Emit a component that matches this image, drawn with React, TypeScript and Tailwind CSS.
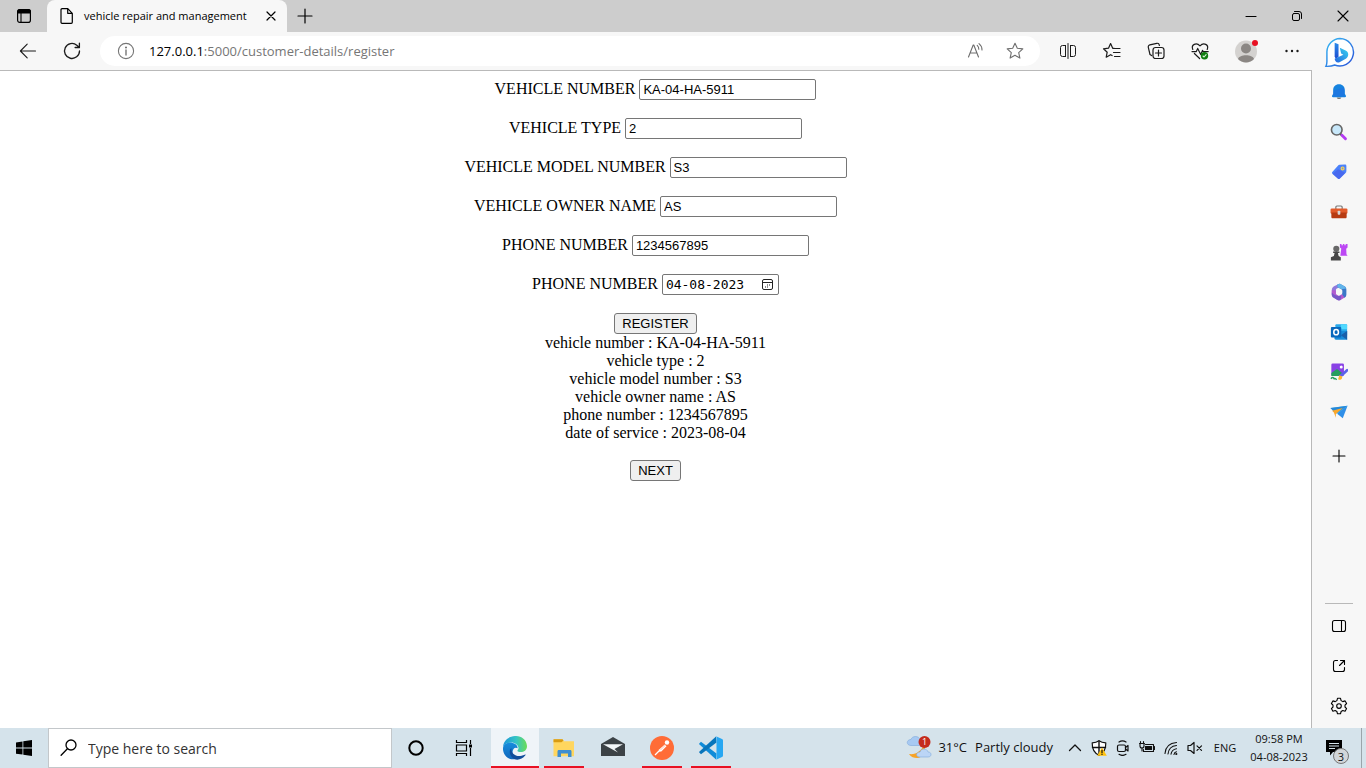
import type { ReactNode } from "react";

type IconProps = { className?: string; box?: string; children: ReactNode };

function Icon({ className = "size-5", box = "0 0 20 20", children }: IconProps) {
  return (
    <svg
      viewBox={box}
      className={className}
      fill="none"
      stroke="currentColor"
      strokeWidth="1.1"
      strokeLinecap="round"
      strokeLinejoin="round"
      aria-hidden="true"
    >
      {children}
    </svg>
  );
}

const starPath = "M10 2.2 12.3 7.3 17.8 7.9 13.7 11.6 14.9 17.1 10 14.3 5.1 17.1 6.3 11.6 2.2 7.9 7.7 7.3Z";

function IconButton({ label, className = "w-11", children }: { label: string; className?: string; children: ReactNode }) {
  return (
    <button type="button" aria-label={label} className={`flex h-full shrink-0 items-center justify-center ${className}`}>
      {children}
    </button>
  );
}

function TitleBar() {
  return (
    <header className="flex h-8 shrink-0 bg-[#cdcdcd] text-black">
      <IconButton label="Tab actions" className="w-[47px]">
        <Icon className="size-4" box="0 0 16 16">
          <rect x="1.6" y="1.6" width="12.8" height="12.8" rx="2.2" strokeWidth="1.2" />
          <path d="M1.6 5V3.8A2.2 2.2 0 0 1 3.8 1.6h8.4a2.2 2.2 0 0 1 2.2 2.2V5Z" fill="currentColor" />
          <path d="M5 5v9.4" />
        </Icon>
      </IconButton>
      <div className="flex w-60 items-center rounded-t-lg bg-[#f7f7f7] pl-3">
        <Icon className="size-4 shrink-0" box="0 0 16 16">
          <path d="M2 1.7a1 1 0 0 1 1-1h5.8L13.3 5.300V14.3a1 1 0 0 1-1 1H3a1 1 0 0 1-1-1ZM8.700.8v4.500h4.500" strokeWidth="1.2" />
        </Icon>
        <span className="ml-[9px] flex-1 text-[11px] leading-4 whitespace-nowrap">vehicle repair and management</span>
        <button type="button" aria-label="Close tab" className="mr-2 flex size-4 shrink-0 items-center justify-center">
          <Icon className="size-4" box="0 0 16 16">
            <path d="m4 4 8 8M12 4l-8 8" strokeWidth="1.2" />
          </Icon>
        </button>
      </div>
      <IconButton label="New tab" className="w-9">
        <Icon className="size-4" box="0 0 16 16">
          <path d="M8 1v14M1 8h14" strokeWidth="1.2" />
        </Icon>
      </IconButton>
      <div className="flex-1" />
      <IconButton label="Minimize" className="w-[46px]">
        <Icon className="size-3" box="0 0 12 12">
          <path d="M1 6.500h10" />
        </Icon>
      </IconButton>
      <IconButton label="Restore" className="w-[46px]">
        <Icon className="size-3" box="0 0 12 12">
          <rect x="1.500" y="3.500" width="7" height="7" rx="1.500" strokeWidth="1" />
          <path d="M3.500 1.500h4.500a2.500 2.500 0 0 1 2.500 2.500v4.500" strokeWidth="1" />
        </Icon>
      </IconButton>
      <IconButton label="Close window" className="w-[46px]">
        <Icon className="size-3" box="0 0 12 12">
          <path d="m1 1 10 10M11 1 1 11" />
        </Icon>
      </IconButton>
    </header>
  );
}

function Toolbar() {
  return (
    <nav className="flex h-[38px] shrink-0 items-center bg-[#f7f7f7] pl-1.5 text-[#1b1b1b]">
      <IconButton label="Back">
        <Icon>
          <path d="M17.500 10H2.500M9.200 3.200 2.400 10l6.800 6.800" />
        </Icon>
      </IconButton>
      <IconButton label="Refresh">
        <Icon>
          <path d="M17.500 10A7.500 7.500 0 1 1 14.800 4.200L17.400 6.500M17.400 2.200v4.300h-4.300" strokeWidth="1.3" />
        </Icon>
      </IconButton>
      <div className="mx-1.5 flex h-[30px] min-w-0 flex-1 items-center rounded-full bg-white pr-1 pl-4">
        <Icon className="size-5 shrink-0 text-[#767676]">
          <circle cx="10" cy="10" r="7.600" />
          <path d="M10 9v5" strokeWidth="1.400" />
          <circle cx="10" cy="6.500" r=".5" fill="currentColor" />
        </Icon>
        <a href="#address" className="ml-[13px] flex-1 truncate text-[13px] leading-5 text-[#767676]">
          <span className="text-black">127.0.0.1</span>:5000/customer-details/register
        </a>
        <button type="button" aria-label="Read aloud" className="flex w-9 justify-center text-[#6e6e6e]">
          <Icon>
            <path d="m2.500 16 4.700-12h.6l4.700 12M4.100 12h6.800" />
            <path d="M11.200 4.400a5 5 0 0 1 1.600 3.900M13 2.600a8 8 0 0 1 3 6.400" />
          </Icon>
        </button>
        <button type="button" aria-label="Add to favorites" className="flex w-[42px] justify-center text-[#6e6e6e]">
          <Icon>
            <path d={starPath} />
          </Icon>
        </button>
      </div>
      <IconButton label="Split screen">
        <Icon>
          <path d="M7.500 4.500H4.500a2 2 0 0 0-2 2v7a2 2 0 0 0 2 2h3M12.500 4.500h3a2 2 0 0 1 2 2v7a2 2 0 0 1-2 2h-3M7.500 4.500v11M12.500 4.500v11M10 2.500v15" strokeWidth="1" />
        </Icon>
      </IconButton>
      <IconButton label="Favorites">
        <Icon>
          <path d="M12.200 7.300h-1.500L8.600 2.600 6.500 7.200l-5 .6 3.700 3.400-1 5 4.400-2.500 1.500.8M12.500 7.500h5.500M11.500 11.500H18M12.500 15.500H18" strokeWidth="1.2" />
        </Icon>
      </IconButton>
      <IconButton label="Collections">
        <Icon>
          <rect x="7" y="6.500" width="11" height="11" rx="2.500" strokeWidth="1.2" />
          <path d="M12.500 9v6M9.500 12h6M5.600 14.600 4 13.500 2.300 6.300a2 2 0 0 1 1.500-2.400l7-1.600a2 2 0 0 1 2.400 1.500l.2.700" strokeWidth="1.2" />
        </Icon>
      </IconButton>
      <IconButton label="Browser essentials">
        <Icon>
          <path d="M2.800 8.500C.8 3.700 6.300.8 10 4.900c3.700-4.100 9.200-1.200 7.200 3.600M2 10.600h4.300l1.400-3.200 3 6 1.800-4 .7 1.200h5M4.400 12.500l5.200 5" strokeWidth="1.2" />
          <circle cx="14.500" cy="14.800" r="3.700" fill="#107c10" stroke="none" />
          <path d="m13 15 1.100 1 2-2.300" stroke="#d9f2d9" />
        </Icon>
      </IconButton>
      <IconButton label="Profile" className="w-12">
        <svg viewBox="0 0 24 24" className="size-6" aria-hidden="true">
          <circle cx="12" cy="12.500" r="11" fill="#d4d2d0" />
          <circle cx="12" cy="9.500" r="5" fill="#8b8784" />
          <path d="M4 20c1.500-5 14.500-5 16 0a11 11 0 0 1-16 0Z" fill="#8b8784" />
          <circle cx="21" cy="4" r="3" fill="#e81123" />
        </svg>
      </IconButton>
      <IconButton label="Settings and more" className="w-[42px]">
        <Icon>
          <g fill="currentColor" stroke="none">
            <circle cx="5.500" cy="10" r="1.200" />
            <circle cx="11" cy="10" r="1.200" />
            <circle cx="16.500" cy="10" r="1.200" />
          </g>
        </Icon>
      </IconButton>
    </nav>
  );
}

const fields = [
  { id: "vehicle-number", label: "VEHICLE NUMBER", value: "KA-04-HA-5911" },
  { id: "vehicle-type", label: "VEHICLE TYPE", value: "2" },
  { id: "vehicle-model", label: "VEHICLE MODEL NUMBER", value: "S3" },
  { id: "owner-name", label: "VEHICLE OWNER NAME", value: "AS" },
  { id: "phone-number", label: "PHONE NUMBER", value: "1234567895" },
];

const details = [
  "vehicle number : KA-04-HA-5911",
  "vehicle type : 2",
  "vehicle model number : S3",
  "vehicle owner name : AS",
  "phone number : 1234567895",
  "date of service : 2023-08-04",
];

const formButton =
  "h-[21px] rounded-[3px] border border-[#767676] bg-[#efefef] px-[7px] font-['Liberation_Sans',sans-serif] text-[13px] leading-4 text-black";

function RegisterPage() {
  return (
    <main className="flex-1 overflow-auto border-t border-r border-[#b9b9b9] bg-white p-2 font-['Liberation_Serif',serif] text-[16px] leading-[18px] text-black">
      <form className="flex flex-col items-center gap-[18px]" onSubmit={(event) => event.preventDefault()}>
        {fields.map((field) => (
          <div key={field.id} className="flex h-[21px] items-baseline gap-1">
            <label htmlFor={field.id}>{field.label}</label>
            <input
              id={field.id}
              type="text"
              defaultValue={field.value}
              className="h-[21px] w-[177px] rounded-[2px] border border-[#767676] px-[3px] font-['Liberation_Sans',sans-serif] text-[13px]"
            />
          </div>
        ))}
        <div className="flex h-[21px] items-baseline gap-1">
          <label htmlFor="service-date">PHONE NUMBER</label>
          <div className="flex h-[21px] w-[117px] items-center rounded-[2px] border border-[#767676] px-[3px]">
            <input
              id="service-date"
              type="text"
              defaultValue="04-08-2023"
              className="h-4 min-w-0 flex-1 font-['DejaVu_Sans_Mono','Liberation_Mono',monospace] text-[13px]"
            />
            <button type="button" aria-label="Show date picker" className="mr-px">
              <svg viewBox="0 0 13 13" className="size-[13px]" fill="none" stroke="#222" aria-hidden="true">
                <rect x="1.500" y="1.500" width="10" height="10" rx="1.500" />
                <path d="M1.500 4.500h10" />
                <path d="M6 7h1M8 7h1M4 9h1M6 9h1" strokeWidth="1.200" />
              </svg>
            </button>
          </div>
        </div>
        <button type="submit" className={formButton}>REGISTER</button>
      </form>
      <section className="text-center">
        {details.map((line) => (
          <p key={line}>{line}</p>
        ))}
        <button type="button" className={`mt-[18px] ${formButton}`}>NEXT</button>
      </section>
    </main>
  );
}

function BingLogo() {
  return (
    <svg viewBox="0 0 32 32" className="size-[31px]" aria-hidden="true">
      <defs>
        <linearGradient id="bing-ring" x1="0" y1="0" x2="1" y2="1">
          <stop offset="0" stopColor="#37bdf4" />
          <stop offset="1" stopColor="#2850d8" />
        </linearGradient>
        <linearGradient id="bing-b" x1="0" y1="0" x2="0" y2="1">
          <stop offset="0" stopColor="#2b8bea" />
          <stop offset="1" stopColor="#1b49cf" />
        </linearGradient>
        <linearGradient id="bing-sweep" x1="1" y1="0" x2="0" y2="1">
          <stop offset="0" stopColor="#38d6ef" />
          <stop offset="1" stopColor="#2463df" />
        </linearGradient>
      </defs>
      <path d="M16.500 1.500A14.200 14.200 0 1 1 11 28.900c-2.500 1.200-5.300 1.500-9 1.400.8-1.500 1-3 1-5V15.100A14 14 0 0 1 16.500 1.500Z" fill="#fff" stroke="url(#bing-ring)" strokeWidth="1.500" />
      <path d="m11 6 4 1.500v12.700L12.500 23 11 20.500Z" fill="url(#bing-b)" />
      <path d="m16.300 11.200 6 2.800c4 2 3.300 6.600.2 8.500L16 26c-2.800 1.200-5-1.100-5-3.500l9-4.200-2.300-1.200Z" fill="url(#bing-sweep)" />
    </svg>
  );
}

const sideIcons: { label: string; art: ReactNode }[] = [
  {
    label: "Notifications",
    art: (
      <>
        <path d="M7.500 16h5c-.4 2.500-4.600 2.500-5 0Z" fill="#777" />
        <path d="M10 1.500C6 1.500 3.500 4.500 3.500 8v4l-1.200 2.300c-.3.900.1 1.500 1 1.500h13.400c.9 0 1.300-.6 1-1.500L16.500 12V8c0-3.500-2.500-6.500-6.500-6.500Z" fill="#1683df" />
        <path d="M4 8.500 3 15h13c0-4 0-8-1-10Z" fill="#2b62e3" opacity=".35" />
      </>
    ),
  },
  {
    label: "Search",
    art: (
      <>
        <path d="m11.500 12 2 2" stroke="#555" strokeWidth="2.500" />
        <path d="m13.300 13.600 3.900 3.900" stroke="#b43bf2" strokeWidth="3.200" strokeLinecap="round" />
        <circle cx="7.500" cy="7.500" r="5.900" fill="#c8e8fa" stroke="#666" strokeWidth="1.800" />
      </>
    ),
  },
  {
    label: "Shopping",
    art: (
      <>
        <path d="m10.500 2 6-.2a1.500 1.500 0 0 1 1.700 1.500v5.500c0 1-.3 1.600-1 2.200L11 17.300c-.8.800-1.600.8-2.400 0l-5.800-5.200c-.8-.7-.8-1.500 0-2.300l6-6.800c.5-.6 1-.9 1.700-1Z" fill="#4b82fb" />
        <path d="m3 12 6-5 8 4-6 6.300c-.8.800-1.600.8-2.400 0Z" fill="#454fe3" opacity=".5" />
        <circle cx="14" cy="6" r="1.600" fill="#7798cf" stroke="#ffd24b" strokeWidth="1.300" />
      </>
    ),
  },
  {
    label: "Tools",
    art: (
      <>
        <path d="M6.500 7V4.500c0-1 .4-1.200 1.200-1.200h4.600c.8 0 1.200.2 1.200 1.200V7" fill="none" stroke="#777" strokeWidth="1.300" />
        <rect x=".6" y="6" width="18.800" height="6" rx="1.400" fill="#e25b2b" />
        <path d="M1.500 10.500h17V15.500c0 1-.4 1.500-1.500 1.500H3c-1.100 0-1.500-.5-1.500-1.500Z" fill="#b73b12" />
        <rect x="8.500" y="8.500" width="3" height="4.500" rx="1" fill="#d7d7d7" />
      </>
    ),
  },
  {
    label: "Games",
    art: (
      <>
        <path d="M11 1h1.800v1.600h1.500V1H16v1.600h1.400V1H19.500V5l-1.500 1.500.3 6 1.200 1.700h-8l1-8L11 5Z" fill="#bc48f4" />
        <circle cx="7" cy="6.500" r="3.400" fill="#686868" />
        <path d="M3.500 9.500h7v1.600H8.800l.8 3.400 2.400 1.300V19.500H1v-3.700l3.300-1.300.8-3.400H3.500Z" fill="#484848" />
      </>
    ),
  },
  {
    label: "Microsoft 365",
    art: (
      <>
        <path d="M10.500.8 5 3.200C3 4.200 2 5.500 2 8v5.500l4.500-1.800V8c0-1 .4-1.500 1.200-2L12.500 3.500Z" fill="#8f79dc" />
        <path d="M2 8v4.500c0 2 .7 3 2.200 4l4 2.300c1.200.7 2.400.7 3.600 0l4-2.300c1.300-.8 2-1.700 2.200-3.500l-5-.5-2.500 1.600c-.4.200-.8.200-1.200 0l-2-1.200c-.6-.4-.8-.8-.8-1.600V8Z" fill="#b35bcf" />
        <path d="M8.500 1.300 11 .8l5 2.800c1.400.8 2.200 2 2.200 3.800v5.200c0 1.700-.7 2.900-2 3.800l-3-4.200c.4-.4.500-.8.500-1.400V8.600c0-.8-.4-1.300-1-1.700L8 4.500Z" fill="#3b78c8" />
        <path d="M8.500 1.300 11 .8l5 2.800c1 .6 1.700 1.400 2 2.400l-5.200 1L8 4.500Z" fill="#62b4ea" />
        <path d="M2 10.500c2.500 3 6 4.500 10.500 3.500l-.7 4.800c-1.200.7-2.400.7-3.600 0l-4-2.300c-1.500-1-2.200-2-2.200-4Z" fill="#6357c4" opacity=".75" />
      </>
    ),
  },
  {
    label: "Outlook",
    art: (
      <>
        <rect x="6" y="1.500" width="13" height="13" rx="1" fill="#28a8ea" />
        <path d="M12 1.500h7V7h-7Z" fill="#50d9ff" />
        <path d="M5 9h14v9.500H6.500A1.500 1.500 0 0 1 5 17Z" fill="#168bd9" />
        <path d="m12 13.500 7-4.500v9.500Z" fill="#185ea9" />
        <rect x="1" y="4.500" width="11.500" height="11.500" rx="1" fill="#0868bd" />
        <ellipse cx="6.800" cy="10.200" rx="2.600" ry="2.900" fill="none" stroke="#fff" strokeWidth="1.700" />
      </>
    ),
  },
  {
    label: "Image Creator",
    art: (
      <>
        <rect x="1.500" y=".5" width="14" height="14" rx="1.500" fill="#8942e5" />
        <path d="m1.500 11 5-3.500c1-.7 1.500-.7 2.400 0l4.500 3.500-4 3.500H1.500Z" fill="#259e5d" />
        <circle cx="12.500" cy="4.500" r="1.700" fill="#fff" />
        <path d="m19 8-6 5.500" stroke="#5a63ea" strokeWidth="3" strokeLinecap="round" />
        <path d="m9 18 1.400-4.500 3.200 1.500c0 3.500-2 4.500-4.600 3Z" fill="#fdb52c" />
        <path d="M1 17.500c2-2.500 4-1 3 .5 1.500-1.500 2.500-.5 3.300.8" fill="none" stroke="#259e5d" strokeWidth="1.500" />
      </>
    ),
  },
  {
    label: "Drop",
    art: (
      <>
        <path d="M.5 5.500 19.500 3l-9 10.300Z" fill="#49b4ef" />
        <path d="M.5 5.500 19.500 3 6.500 12Z" fill="#2789d8" />
        <path d="m2.300 8.500 12-3-7.800 6.800V16.500L4.300 10.500Z" fill="#faa82c" />
        <path d="M19.500 3 8 12l6.200 5Z" fill="#2f8fe8" />
      </>
    ),
  },
];

function Sidebar() {
  return (
    <aside className="flex w-[54px] shrink-0 flex-col items-center bg-[#f7f7f7] text-black">
      <button type="button" aria-label="Bing Chat" className="flex h-10 w-full shrink-0 items-center justify-center">
        <BingLogo />
      </button>
      {sideIcons.map((item) => (
        <button key={item.label} type="button" aria-label={item.label} className="flex h-10 w-full shrink-0 items-center justify-center">
          <svg viewBox="0 0 20 20" className="size-[18px]" fill="none" aria-hidden="true">
            {item.art}
          </svg>
        </button>
      ))}
      <button type="button" aria-label="Customize sidebar" className="mt-1 flex h-10 w-full shrink-0 items-center justify-center">
        <Icon className="size-4" box="0 0 16 16">
          <path d="M8 2v12M2 8h12" />
        </Icon>
      </button>
      <div className="flex-1" />
      <hr className="mb-0.5 w-7 border-[#b9b9b9]" />
      <SideControl label="Hide sidebar">
        <rect x="3.500" y="4.500" width="13" height="11" rx="2" />
        <path d="M12.500 4.500v11" />
      </SideControl>
      <SideControl label="Open in new window">
        <path d="M8.500 4.500H6.500a2 2 0 0 0-2 2v7a2 2 0 0 0 2 2h7a2 2 0 0 0 2-2v-2M11.500 4.500h4V8.500M15.500 4.500l-5 5" />
      </SideControl>
      <SideControl label="Settings">
        <path d="M8.500 2.300h3l.6 2.300 1.700 1 2.300-.7 1.500 2.600L16 9.200v1.800l1.600 1.600-1.500 2.600-2.300-.7-1.700 1-.6 2.300h-3l-.6-2.300-1.700-1-2.300.7-1.500-2.600L4 11V9.200L2.400 7.500l1.500-2.600 2.300.7 1.700-1Z" />
        <circle cx="10" cy="10.100" r="2.300" />
      </SideControl>
      <div className="h-0.5 shrink-0" />
    </aside>
  );
}

function SideControl({ label, children }: { label: string; children: ReactNode }) {
  return (
    <button type="button" aria-label={label} className="flex h-10 w-full shrink-0 items-center justify-center">
      <Icon>{children}</Icon>
    </button>
  );
}

function EdgeLogo() {
  return (
    <svg viewBox="0 0 24 24" className="size-6" aria-hidden="true">
      <defs>
        <linearGradient id="edge-top" x1="0" x2="1">
          <stop offset="0" stopColor="#1b94d8" />
          <stop offset=".55" stopColor="#35c5c5" />
          <stop offset="1" stopColor="#6bdc55" />
        </linearGradient>
        <linearGradient id="edge-side" x1="0" y1="0" x2="0" y2="1">
          <stop offset="0" stopColor="#168ddd" />
          <stop offset="1" stopColor="#1267bb" />
        </linearGradient>
      </defs>
      <path d="M0 11C1-3 23-4 24 10c0 5-4 6.500-7.500 6-2.400-.4-2.400-1.400-1.400-2.400C17 10 12 6 7.500 6.500 3 7 .8 9 0 11Z" fill="url(#edge-top)" />
      <path d="M0 12c.5-4 5-6 9-5.300 3.500.8 6 3 5.500 5.500-4-2.700-8 5.300-1.500 10.500C6 25.500-.5 19 0 12Z" fill="url(#edge-side)" />
      <path d="M8.500 12c-1 4 3 8.500 8.500 8 2.500-.2 4-1 5-1.500.6-.2.800.2.400.8C18 25 11 25 8 20c-2-3-1.500-6.500.5-8Z" fill="#124e9b" />
    </svg>
  );
}

const apps: { label: string; running: boolean; active: boolean; art: ReactNode }[] = [
  { label: "Microsoft Edge", running: true, active: true, art: <EdgeLogo /> },
  {
    label: "File Explorer",
    running: true,
    active: false,
    art: (
      <svg viewBox="0 0 24 24" className="size-6" aria-hidden="true">
        <path d="M1.500 4.500c0-.8.3-1.200 1-1.200h8l1.500 2h10v15h-20.500Z" fill="#ffd65f" />
        <path d="M1.500 3.300h9l1 1.200-2 1.700h-8Z" fill="#d99b12" />
        <path d="M5.500 21v-5.500c0-1 .5-1.500 1.500-1.500h11c1 0 1.500.5 1.500 1.500V21H16v-3.500H9V21Z" fill="#3e8ed0" />
      </svg>
    ),
  },
  {
    label: "Mail",
    running: false,
    active: false,
    art: (
      <svg viewBox="0 0 24 24" className="size-6" aria-hidden="true">
        <path d="M0 8 12 1l12 7v12H0Z" fill="#3c4246" />
        <path d="M2 8.300h20L13.500 13l3.500 3.500Z" fill="#f2f6f8" />
      </svg>
    ),
  },
  {
    label: "Postman",
    running: true,
    active: false,
    art: (
      <svg viewBox="0 0 24 24" className="size-6" aria-hidden="true">
        <circle cx="12" cy="12" r="12" fill="#ff6c37" />
        <circle cx="17" cy="6.500" r="2.200" fill="#fff" />
        <path d="m14.800 8.500 1.700 1.700-5.200 5.300-3 .3.800-2.300Z" fill="#fff" />
        <path d="m5 19 4-4" stroke="#fff" strokeWidth="1.300" />
        <path d="m10.500 14 5.500-5.500" stroke="#ff9b77" strokeWidth=".6" />
      </svg>
    ),
  },
  {
    label: "Visual Studio Code",
    running: true,
    active: false,
    art: (
      <svg viewBox="0 0 24 24" className="size-6" aria-hidden="true">
        <path d="M17.500 17.500 2 5.800.5 7.300c-.5.500-.4.900 0 1.300L17 23.500Z" fill="#0f8bd8" />
        <path d="M17.500 6.500 2 18.200.5 16.700c-.5-.5-.4-.9 0-1.300L17 .5Z" fill="#0875bb" />
        <path d="m17 .3 6 2.800c.6.300 1 .8 1 1.500v14.800c0 .7-.4 1.200-1 1.500l-6 2.800c.3-.3.500-.7.500-1.200V1.500c0-.5-.2-.9-.5-1.200Z" fill="#27a7f2" />
      </svg>
    ),
  },
];

function Tray({ label, children }: { label: string; children: ReactNode }) {
  return (
    <button type="button" aria-label={label} className="flex h-full w-6 shrink-0 items-center justify-center">
      <Icon className="size-4" box="0 0 16 16">{children}</Icon>
    </button>
  );
}

function Taskbar() {
  return (
    <footer className="flex h-10 shrink-0 items-center bg-[#d5e3eb] text-[#111]">
      <IconButton label="Start" className="w-12">
        <svg viewBox="0 0 16 16" className="size-4" fill="#000" aria-hidden="true">
          <path d="M0 2.400 6.500 1.500V7.500H0ZM7.300 1.300 16 0v7.500H7.300ZM0 8.400h6.500v6.200L0 13.700ZM7.300 8.400H16V16l-8.700-1.300Z" />
        </svg>
      </IconButton>
      <div className="flex h-10 w-[344px] items-center border border-[#c3c7ca] bg-white pl-2.5">
        <Icon className="size-5 shrink-0 text-black">
          <circle cx="12" cy="7" r="5" strokeWidth="1.300" />
          <path d="m8.400 10.700-6.300 6.500" strokeWidth="1.300" />
        </Icon>
        <input
          type="text"
          aria-label="Search"
          placeholder="Type here to search"
          className="ml-[9px] min-w-0 flex-1 text-[14px] placeholder:text-[#333] placeholder:opacity-100"
        />
      </div>
      <IconButton label="Cortana" className="w-12">
        <Icon className="size-4 text-black" box="0 0 16 16">
          <circle cx="8" cy="8" r="6.700" strokeWidth="2" />
        </Icon>
      </IconButton>
      <IconButton label="Task view" className="mr-[3px] w-12">
        <svg viewBox="0 0 18 16" className="h-4 w-[18px]" fill="none" stroke="#000" aria-hidden="true">
          <path d="M1.500 0v2.500h10V0M1.500 16v-2.500h10V16M1.500 5h10v6h-10ZM15.500 0v4M15.500 8v8" strokeWidth="1.200" />
          <path d="M14 4.500h3v3h-3Z" fill="#000" stroke="none" />
        </svg>
      </IconButton>
      <div className="flex h-full gap-px">
        {apps.map((app) => (
          <button
            key={app.label}
            type="button"
            aria-label={app.label}
            className={`flex h-full w-12 flex-col items-center ${app.active ? "bg-[#eff4f8]" : ""}`}
          >
            <span className="flex flex-1 items-center pt-0.5">{app.art}</span>
            <span className={`h-0.5 ${app.active ? "w-12" : "w-10"} ${app.running ? "bg-[#e81123]" : ""}`} />
          </button>
        ))}
      </div>
      <div className="flex-1" />
      <button type="button" className="flex h-full shrink-0 items-center text-[13px] whitespace-nowrap">
        <svg viewBox="0 0 26 24" className="h-6 w-[26px]" aria-hidden="true">
          <path d="M18 9c3 6-1 13-7 13-3 0-6-1-8-4 7 1 12-3 15-9Z" fill="#f7a326" />
          <path d="M5 9.500c-5 0-5-6 0-6 1-4 8-4 9 0 4 0 4 6 0 6Z" fill="#a7c9f2" stroke="#7ea9dc" strokeWidth=".6" />
          <path d="M14 21c-5 0-4-5 0-5 1-4 7-4 8 0 4 0 4 5 0 5Z" fill="#bbd5f6" stroke="#7ea9dc" strokeWidth=".6" />
          <circle cx="18.500" cy="6" r="6" fill="#c42b1c" />
          <text x="18.500" y="9" fill="#fff" textAnchor="middle" className="text-[9px]">1</text>
        </svg>
        <span className="ml-1.5">31°C</span>
        <span className="mr-2.5 ml-2">Partly cloudy</span>
      </button>
      <Tray label="Show hidden icons">
        <path d="m2.500 10.500 5.500-5.500 5.500 5.500" strokeWidth="1.300" />
      </Tray>
      <Tray label="Windows Security">
        <path d="M8 .8c2 1.500 4 2 6.800 2C15 9 13 13 8 15.200 3 13 1 9 1.200 2.800 4 2.800 6 2.300 8 .8Z" fill="#fff" strokeWidth="1.200" />
        <path d="M8 1v14M1.500 7.500h13" strokeWidth="1.400" />
        <path d="m11 7.500 4.800 8.200H6.200Z" fill="#ffc20e" stroke="none" />
        <path d="M11 10.300v2.500M11 14.300v.2" strokeWidth="1.200" />
      </Tray>
      <Tray label="Meet Now">
        <rect x="2.500" y="5" width="8" height="6.500" rx="1.500" strokeWidth="1.200" />
        <path d="m10.500 7.500 2.500-2v5.500l-2.500-2M4 2c2-1.300 5-1.300 7 0M4 14.300c2 1.300 5 1.300 7 0" strokeWidth="1.200" />
      </Tray>
      <Tray label="Battery">
        <path d="M6.500 4.500h8v7h-10v-2M15.500 6.500v3M.5 3.500h5M1.500 1.500v2M4.500 1.500v2M1 3.500V6a2 2 0 0 0 4 0V3.500M3 8v3" />
        <path d="M6.500 6.500h6v3h-6Z" fill="currentColor" />
      </Tray>
      <Tray label="Network">
        <path d="M2 13.500C2.500 7 7 3 13.500 2.500M5 14c.5-5 3.500-8 8.500-8.500M8 14.200c.5-3.200 2.300-5 5.500-5.500M11 14.500c.2-1.500 1-2.500 2.500-2.700" />
        <circle cx="13.300" cy="14" r="1.100" fill="currentColor" stroke="none" />
      </Tray>
      <Tray label="Volume muted">
        <path d="M1 5.500h2.500l3.500-3v11l-3.500-3H1ZM10 5.800l4.500 4.500M14.500 5.800 10 10.300" strokeWidth="1.200" />
      </Tray>
      <button type="button" className="h-full w-9 shrink-0 text-[11px]">ENG</button>
      <button type="button" className="h-full w-[72px] shrink-0 text-[11px] leading-[18px] whitespace-nowrap">
        <span className="block">09:58 PM</span>
        <span className="block">04-08-2023</span>
      </button>
      <button type="button" aria-label="Notifications, 3 new" className="relative flex h-full w-[46px] shrink-0 items-center justify-center">
        <svg viewBox="0 0 16 16" className="mr-2 size-4" aria-hidden="true">
          <path d="M0 0h16v12H7l-3 3.500V12H0Z" fill="#000" />
          <path d="M3 3.500h10M3 6h10M3 8.500h6" stroke="#d5e3eb" />
        </svg>
        <span className="absolute right-3 bottom-1 flex size-4 items-center justify-center rounded-full border border-[#777] bg-[#d2d6d9] text-[11px] leading-none">
          3
        </span>
      </button>
      <div className="h-full w-[5px] shrink-0 border-l border-[#9aa5ab]" />
    </footer>
  );
}

export default function App() {
  return (
    <div className="flex h-screen flex-col overflow-hidden bg-white font-['Open_Sans','Noto_Sans',sans-serif]">
      <TitleBar />
      <div className="flex min-h-0 flex-1">
        <div className="flex min-w-0 flex-1 flex-col">
          <Toolbar />
          <RegisterPage />
        </div>
        <Sidebar />
      </div>
      <Taskbar />
    </div>
  );
}
